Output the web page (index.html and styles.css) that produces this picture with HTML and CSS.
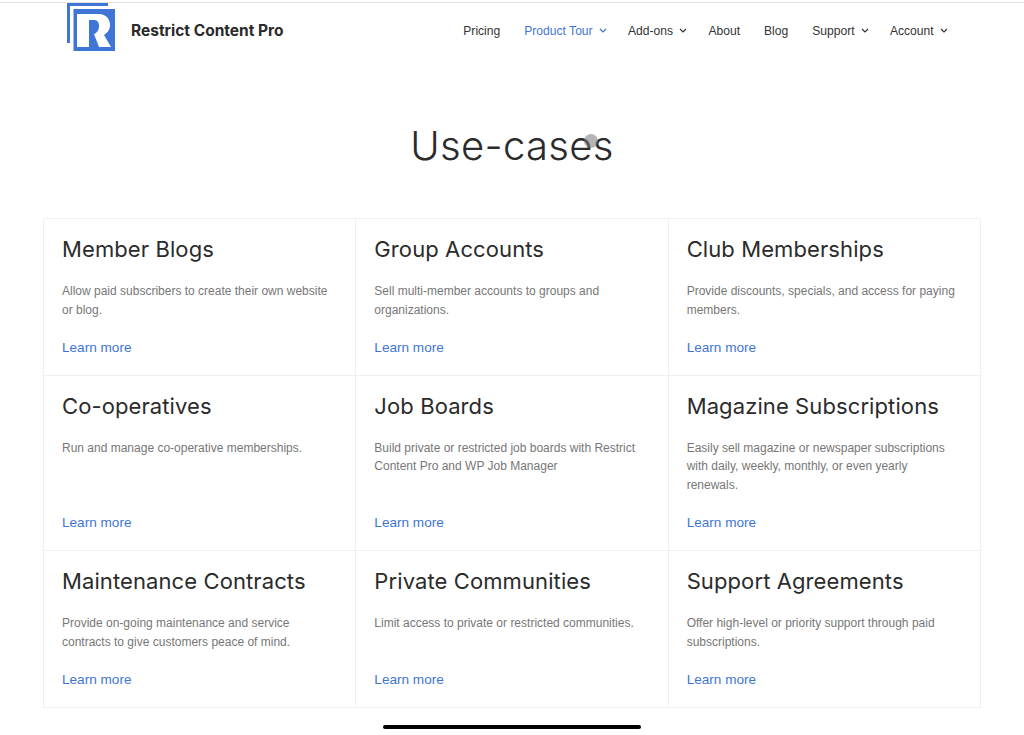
FILE: index.html
```html
<!DOCTYPE html>
<html lang="en">
  <head>
    <meta charset="utf-8">
    <title>Use-cases - Restrict Content Pro</title>
    <link rel="stylesheet" href="styles.css">
  </head>
  <body>
    <header class="site-header">
      <a class="brand" href="#">
        <svg class="brand-logo" width="49" height="48" viewBox="0 0 49 48">
          <path d="M0 0H41V3H3V40H0z" fill="#3f76d6"/>
          <path d="M6.5 6H48V48H6.5z" fill="#3f76d6"/>
          <path d="M10 11H32C39 11 43 16 43 22C43 27 40 30 37 32L44 44H32L27 31C30 30 32 27 32 23C32 19 30 17 27 17H22V44H10z" fill="#fff"/>
        </svg>
        <span class="brand-name">Restrict Content Pro</span>
      </a>
      <nav class="main-nav">
        <a href="#">Pricing</a>
        <a href="#" class="active">Product Tour <svg class="caret" width="8" height="5" viewBox="0 0 8 5"><path d="M1 1l3 3 3-3"/></svg></a>
        <a href="#">Add-ons <svg class="caret" width="8" height="5" viewBox="0 0 8 5"><path d="M1 1l3 3 3-3"/></svg></a>
        <a href="#">About</a>
        <a href="#">Blog</a>
        <a href="#">Support <svg class="caret" width="8" height="5" viewBox="0 0 8 5"><path d="M1 1l3 3 3-3"/></svg></a>
        <a href="#">Account <svg class="caret" width="8" height="5" viewBox="0 0 8 5"><path d="M1 1l3 3 3-3"/></svg></a>
      </nav>
    </header>

    <h1 class="page-title">Use-cases</h1>

    <div class="cases">
      <div class="case">
        <h2>Member Blogs</h2>
        <p>Allow paid subscribers to create their own website or blog.</p>
        <a href="#">Learn more</a>
      </div>
      <div class="case">
        <h2>Group Accounts</h2>
        <p>Sell multi-member accounts to groups and organizations.</p>
        <a href="#">Learn more</a>
      </div>
      <div class="case">
        <h2>Club Memberships</h2>
        <p>Provide discounts, specials, and access for paying members.</p>
        <a href="#">Learn more</a>
      </div>
      <div class="case">
        <h2>Co-operatives</h2>
        <p>Run and manage co-operative memberships.</p>
        <a href="#">Learn more</a>
      </div>
      <div class="case">
        <h2>Job Boards</h2>
        <p>Build private or restricted job boards with Restrict Content Pro and WP Job Manager</p>
        <a href="#">Learn more</a>
      </div>
      <div class="case">
        <h2>Magazine Subscriptions</h2>
        <p>Easily sell magazine or newspaper subscriptions with daily, weekly, monthly, or even yearly renewals.</p>
        <a href="#">Learn more</a>
      </div>
      <div class="case">
        <h2>Maintenance Contracts</h2>
        <p>Provide on-going maintenance and service contracts to give customers peace of mind.</p>
        <a href="#">Learn more</a>
      </div>
      <div class="case">
        <h2>Private Communities</h2>
        <p>Limit access to private or restricted communities.</p>
        <a href="#">Learn more</a>
      </div>
      <div class="case">
        <h2>Support Agreements</h2>
        <p>Offer high-level or priority support through paid subscriptions.</p>
        <a href="#">Learn more</a>
      </div>
    </div>

    <!-- touch marker and home bar from the device capture -->
    <div class="touch-dot"></div>
    <div class="home-bar"></div>
  </body>
</html>
```

FILE: styles.css
```css
body {
  position: relative;
  margin: 0;
  height: 735px;
  overflow: hidden;
  background-color: #fff;
  font-family: "Liberation Sans", Arial, sans-serif;
  color: #333;
}
a {
  text-decoration: none;
}
.site-header {
  display: flex;
  justify-content: space-between;
  height: 54px;
  margin-top: 2px;
  padding: 0 79px 0 67px;
  border-top: 1px solid #e0e0e0;
}
.brand {
  display: flex;
  align-items: center;
  gap: 15px;
}
.brand-logo {
  align-self: flex-start;
}
.brand-name {
  font-family: Inter, sans-serif;
  font-weight: 700;
  font-size: 15.5px;
  color: #2a2a2a;
}
.main-nav {
  display: flex;
  align-items: center;
  gap: 24px;
  height: 55px;
}
.main-nav a {
  font-size: 12.1px;
  color: #333;
}
.main-nav a.active {
  color: #3f76d6;
}
.caret {
  margin: 0 -3px 0 3px;
  vertical-align: 2px;
  fill: none;
  stroke: currentColor;
  stroke-width: 1.2;
}
.page-title {
  margin: 0;
  padding-top: 66px;
  height: 161px;
  box-sizing: border-box;
  text-align: center;
  font-family: Inter, sans-serif;
  font-weight: 300;
  font-size: 40px;
  letter-spacing: 0.3px;
  line-height: 46px;
  color: #2b2b2b;
}
.cases {
  display: grid;
  grid-template-columns: repeat(3, 1fr);
  margin: 0 43px;
  border: 1px solid #f0f0f0;
  border-width: 1px 0 0 1px;
}
.case {
  display: flex;
  flex-direction: column;
  padding: 15px 18px 17px;
  border: 1px solid #f0f0f0;
  border-width: 0 1px 1px 0;
}
.case h2 {
  margin: 0 0 18px;
  font-family: Inter, sans-serif;
  font-weight: 400;
  font-size: 22px;
  letter-spacing: 0.1px;
  line-height: 30px;
  color: #2b2b2b;
}
.case p {
  margin: 0 0 18.8px;
  font-size: 12px;
  line-height: 18.5px;
  color: #777;
}
.case a {
  margin-top: auto;
  font-size: 13.6px;
  line-height: 20px;
  color: #3f76d6;
}
.touch-dot {
  position: absolute;
  left: 584px;
  top: 134px;
  width: 14px;
  height: 14px;
  border-radius: 50%;
  background-color: rgba(120, 120, 120, 0.55);
}
.home-bar {
  position: absolute;
  left: 383px;
  top: 725px;
  width: 258px;
  height: 4px;
  border-radius: 2px;
  background-color: #000;
}
```
